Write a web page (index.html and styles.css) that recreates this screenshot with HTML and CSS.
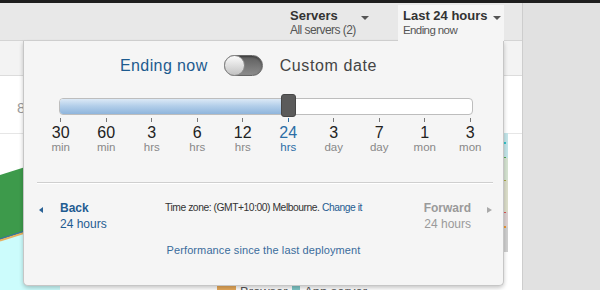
FILE: index.html
```html
<!DOCTYPE html>
<html>
<head>
<meta charset="utf-8">
<title>Time picker</title>
<link rel="stylesheet" href="styles.css">
</head>
<body>
<div class="topline"></div>
<div class="main">
  <div class="app">
    <header class="topbar">
      <div class="nav-item servers">
        <div class="nav-text">
          <div class="nav-title">Servers</div>
          <div class="nav-sub">All servers (2)</div>
        </div>
        <span class="caret"></span>
      </div>
      <div class="nav-item active">
        <div class="nav-text">
          <div class="nav-title">Last 24 hours</div>
          <div class="nav-sub">Ending now</div>
        </div>
        <span class="caret"></span>
      </div>
    </header>
    <div class="subbar"></div>
    <div class="content">
      <svg class="chart" width="522" height="214" viewBox="0 0 522 214">
        <line x1="0" y1="57.5" x2="522" y2="57.5" stroke="#e6e6e6" stroke-width="1"/>
        <text x="17" y="37" font-size="15" fill="#9a9a9a" font-family="Liberation Sans, sans-serif">8</text>
        <polygon points="0,164 60,145 60,214 0,214" fill="#ccfcfc"/>
        <polygon points="0,99 60,80 60,145 0,164" fill="#3d9a4b"/>
        <polyline points="0,164.5 60,145.5" fill="none" stroke="#e8b060" stroke-width="2"/>
        <polyline points="0,162.8 60,143.8" fill="none" stroke="#3b6bb0" stroke-width="1"/>
        <rect x="500" y="57" width="8" height="25" fill="#c4e6ea"/>
        <rect x="500" y="82" width="8" height="22" fill="#d6e4d2"/>
        <rect x="500" y="104" width="8" height="32" fill="#dddfcb"/>
        <rect x="500" y="136" width="8" height="15" fill="#ddd2d2"/>
        <rect x="500" y="151" width="8" height="25" fill="#d0d0d0"/>
        <rect x="504" y="66" width="2" height="2" fill="#33c4cc"/>
        <rect x="504" y="81" width="2" height="1" fill="#55aa55"/>
        <rect x="504" y="104" width="2" height="1" fill="#aaaa44"/>
        <rect x="504" y="136" width="2" height="1" fill="#dd5555"/>
        <rect x="504" y="150" width="2" height="2" fill="#ee9933"/>
      </svg>
      <div class="legend">
        <div class="legend-item"><span class="sw browser"></span>Browser</div>
        <div class="legend-item"><span class="sw app"></span>App server</div>
      </div>
    </div>

    <div class="panel">
      <div class="toggle-row">
        <span class="opt opt-now">Ending now</span>
        <span class="switch"><span class="knob"></span></span>
        <span class="opt opt-custom">Custom date</span>
      </div>

      <div class="scale">
        <div class="track">
          <div class="fill"></div>
          <div class="handle"></div>
        </div>
        <div class="marks">
          <div class="mark"><span class="tick"></span><span class="num">30</span><span class="unit">min</span></div>
          <div class="mark"><span class="tick"></span><span class="num">60</span><span class="unit">min</span></div>
          <div class="mark"><span class="tick"></span><span class="num">3</span><span class="unit">hrs</span></div>
          <div class="mark"><span class="tick"></span><span class="num">6</span><span class="unit">hrs</span></div>
          <div class="mark"><span class="tick"></span><span class="num">12</span><span class="unit">hrs</span></div>
          <div class="mark current"><span class="tick"></span><span class="num">24</span><span class="unit">hrs</span></div>
          <div class="mark"><span class="tick"></span><span class="num">3</span><span class="unit">day</span></div>
          <div class="mark"><span class="tick"></span><span class="num">7</span><span class="unit">day</span></div>
          <div class="mark"><span class="tick"></span><span class="num">1</span><span class="unit">mon</span></div>
          <div class="mark"><span class="tick"></span><span class="num">3</span><span class="unit">mon</span></div>
        </div>
      </div>

      <div class="divider"></div>

      <div class="nav-row">
        <div class="back">
          <span class="arrow-left"></span>
          <div><b>Back</b><span>24 hours</span></div>
        </div>
        <div class="tz">Time zone: (GMT+10:00) Melbourne. <a>Change it</a></div>
        <div class="fwd">
          <div><b>Forward</b><span>24 hours</span></div>
          <span class="arrow-right"></span>
        </div>
      </div>

      <div class="perf">Performance since the last deployment</div>
    </div>
  </div>
  <div class="side"></div>
</div>
</body>
</html>
```

FILE: styles.css
```css
* { box-sizing: border-box; }
html, body { margin: 0; padding: 0; }
body {
  width: 600px;
  height: 290px;
  overflow: hidden;
  font-family: "Liberation Sans", Arial, sans-serif;
  background: #e1e1e1;
}

.topline { height: 3px; background: #1e1e1e; }

.main { display: flex; height: 287px; }

.app {
  position: relative;
  width: 522px;
  display: flex;
  flex-direction: column;
  background: #fff;
}

.side {
  flex: 1;
  background: #e1e1e1;
  border-left: 1px solid #cdcdcd;
}

/* top navigation */
.topbar {
  flex-shrink: 0;
  height: 38px;
  background: #e8e8e8;
  border-bottom: 1px solid #d4d4d4;
  display: flex;
  justify-content: flex-end;
  align-items: flex-end;
  padding-right: 18px;
}

.nav-item {
  position: relative;
  z-index: 2;
  display: flex;
  height: 36px;
  margin-bottom: -1px;
  padding: 3px 3px 0 5px;
  white-space: nowrap;
}
.servers { width: 113px; padding-right: 29px; }
.active { width: 106px; background: #f5f5f5; }

.nav-text { flex: 1; }
.nav-title { font-weight: bold; font-size: 13px; line-height: 15px; color: #333; }
.nav-sub { font-size: 12px; line-height: 14px; letter-spacing: -0.55px; color: #555; }
.active .nav-sub { font-size: 11.5px; letter-spacing: -0.6px; }

.caret {
  width: 0;
  height: 0;
  margin-top: 8px;
  border-left: 4px solid transparent;
  border-right: 4px solid transparent;
  border-top: 4px solid #555;
}

.subbar {
  flex-shrink: 0;
  height: 35px;
  background: #f3f3f3;
  border-bottom: 1px solid #dcdcdc;
}

/* page content behind the dropdown */
.content { flex: 1; min-height: 0; overflow: hidden; }
.chart { display: block; width: 522px; height: 214px; }

.legend {
  display: flex;
  margin-top: -5px;
  padding-left: 217px;
  font-size: 13px;
  line-height: 14px;
  color: #555;
  white-space: nowrap;
}
.legend-item { display: flex; align-items: flex-start; width: 75px; }
.sw { width: 19px; height: 12px; margin: 1px 4px 0 0; }
.sw.browser { background: #e6a95a; }
.sw.app { background: #7ec6c6; }

/* dropdown panel */
.panel {
  position: absolute;
  z-index: 1;
  left: 23px;
  top: 38px;
  width: 481px;
  height: 245px;
  background: #f5f5f5;
  border: 1px solid #c6c6c6;
  border-top: none;
  border-radius: 0 0 5px 5px;
  box-shadow: 0 2px 4px rgba(0, 0, 0, 0.22);
}

.toggle-row {
  display: flex;
  align-items: center;
  height: 21px;
  margin-top: 14px;
  padding-left: 96px;
}
.opt { font-size: 16px; line-height: 21px; }
.opt-now { color: #1d5b8f; letter-spacing: 0.4px; }
.opt-custom { color: #444; letter-spacing: 0.6px; }

.switch {
  position: relative;
  width: 39px;
  height: 21px;
  margin: 0 17px 0 16px;
  border-radius: 11px;
  border: 1px solid #666;
  background: linear-gradient(#5e5e5e, #8c8c8c);
  box-shadow: inset 0 1px 2px rgba(0, 0, 0, 0.4);
}
.knob {
  position: absolute;
  left: -1px;
  top: -1px;
  width: 21px;
  height: 21px;
  border-radius: 50%;
  border: 1px solid #8a8a8a;
  background: linear-gradient(#fbfbfb, #c2c2c2);
}

.scale { margin: 22px 10px 0 14px; }

.track {
  position: relative;
  height: 17px;
  margin: 0 20px 0 21px;
  border: 1px solid #bdbdbd;
  border-radius: 4px;
  background: #fff;
}
.fill {
  position: absolute;
  left: 0;
  top: 0;
  bottom: 0;
  width: 224px;
  border-radius: 3px 0 0 3px;
  background: linear-gradient(#dce9f6, #b4cfea 45%, #8fb5dc);
}
.handle {
  position: absolute;
  left: 221px;
  top: -5px;
  width: 15px;
  height: 23px;
  border-radius: 3px;
  background: #5b5b5b;
  border: 1px solid #474747;
}

.marks {
  display: grid;
  grid-template-columns: repeat(10, 1fr);
  margin-top: 3px;
}
.mark { display: flex; flex-direction: column; align-items: center; }
.tick { width: 1px; height: 4px; background: #777; margin-bottom: 3px; }
.num { font-size: 16px; line-height: 16px; color: #222; }
.unit { font-size: 11.5px; line-height: 12px; color: #888; }
.mark.current .tick { background: #2b6da5; }
.mark.current .num,
.mark.current .unit { color: #2b6da5; }

.divider {
  margin: 29px 10px 0 13px;
  border-top: 1px solid #cfcfcf;
  border-bottom: 1px solid #fff;
}

.nav-row {
  display: grid;
  grid-template-columns: 1fr auto 1fr;
  align-items: start;
  margin-top: 16px;
  padding: 0 11px 0 15px;
  font-size: 12px;
  line-height: 16px;
}
.nav-row b, .nav-row span { display: block; }
.nav-row b { font-weight: bold; }

.back { display: flex; align-items: flex-start; color: #1f5c91; }
.arrow-left {
  width: 0;
  height: 0;
  margin: 7px 17px 0 0;
  border-top: 3px solid transparent;
  border-bottom: 3px solid transparent;
  border-right: 4px solid #2b6296;
}

.fwd {
  justify-self: end;
  display: flex;
  align-items: flex-start;
  text-align: right;
  color: #9a9a9a;
}
.arrow-right {
  width: 0;
  height: 0;
  margin: 7px 0 0 16px;
  border-top: 3.5px solid transparent;
  border-bottom: 3.5px solid transparent;
  border-left: 5px solid #aaa;
}

.tz {
  font-size: 10.3px;
  line-height: 16px;
  letter-spacing: -0.45px;
  color: #333;
  margin-right: 4px;
  white-space: nowrap;
}
.tz a { color: #1f5c91; }

.perf {
  margin-top: 12px;
  text-align: center;
  font-size: 11px;
  line-height: 13px;
  letter-spacing: 0.1px;
  color: #3a6c9c;
}
```
